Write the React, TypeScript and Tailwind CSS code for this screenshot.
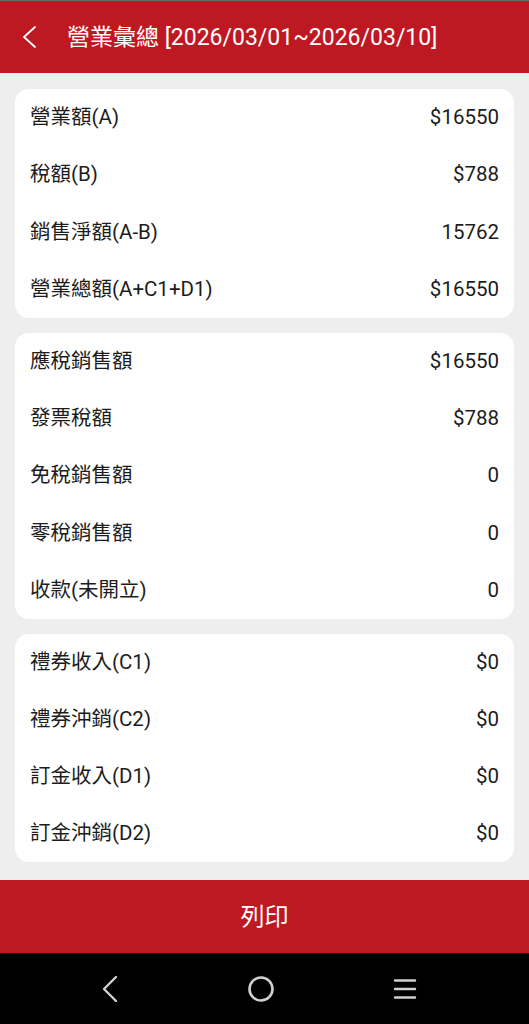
type Row = { label: string; value: string }

const GROUPS: Row[][] = [
  [
    { label: '營業額(A)', value: '$16550' },
    { label: '稅額(B)', value: '$788' },
    { label: '銷售淨額(A-B)', value: '15762' },
    { label: '營業總額(A+C1+D1)', value: '$16550' },
  ],
  [
    { label: '應稅銷售額', value: '$16550' },
    { label: '發票稅額', value: '$788' },
    { label: '免稅銷售額', value: '0' },
    { label: '零稅銷售額', value: '0' },
    { label: '收款(未開立)', value: '0' },
  ],
  [
    { label: '禮券收入(C1)', value: '$0' },
    { label: '禮券沖銷(C2)', value: '$0' },
    { label: '訂金收入(D1)', value: '$0' },
    { label: '訂金沖銷(D2)', value: '$0' },
  ],
]

export default function App() {
  return (
    <div
      className="w-[529px] h-[1024px] flex flex-col bg-[#eeeeee] overflow-hidden"
      style={{ fontFamily: 'Roboto, "Noto Sans CJK TC", sans-serif' }}
    >
      {/* 頂部標題列 */}
      <div className="h-[73px] shrink-0 bg-[#be1922] border-t border-[#6b6b6b] flex items-center text-white">
        <svg className="ml-[21px]" width="16" height="24" viewBox="0 0 16 24" fill="none" stroke="currentColor" strokeWidth="1.8" strokeLinecap="round" strokeLinejoin="round">
          <path d="M14 2 L3 12 L14 22" />
        </svg>
        <span className="ml-[30px] text-[23px] leading-none">營業彙總 [2026/03/01~2026/03/10]</span>
      </div>

      <div className="flex-1 flex flex-col gap-[15px] px-[15px] pt-[16px]">
        {GROUPS.map((rows, i) => (
          <div key={i} className="bg-white rounded-[14px] flex flex-col">
            {rows.map((r) => (
              <div key={r.label} className="h-[57.2px] flex items-center justify-between px-[15px] text-[20.5px] text-[#1c1c1c]">
                <span>{r.label}</span>
                <span>{r.value}</span>
              </div>
            ))}
          </div>
        ))}
      </div>

      <button className="h-[73px] shrink-0 bg-[#be1922] text-white text-[24px] flex items-center justify-center">
        列印
      </button>

      {/* 系統導覽列 */}
      <div className="h-[71px] shrink-0 bg-black flex items-center pl-[96px] text-[#d0d0d0]">
        <svg width="28" height="30" viewBox="0 0 28 30" fill="none" stroke="currentColor" strokeWidth="2.4" strokeLinecap="round" strokeLinejoin="round">
          <path d="M20 3 L8 15 L20 27" />
        </svg>
        <svg className="ml-[123px]" width="28" height="28" viewBox="0 0 28 28" fill="none" stroke="currentColor" strokeWidth="2.6">
          <circle cx="14" cy="14" r="11.5" />
        </svg>
        <svg className="ml-[118px]" width="24" height="24" viewBox="0 0 24 24" fill="none" stroke="currentColor" strokeWidth="2.4" strokeLinecap="round">
          <path d="M2 3.5 H22 M2 12 H22 M2 20.5 H22" />
        </svg>
      </div>
    </div>
  )
}
